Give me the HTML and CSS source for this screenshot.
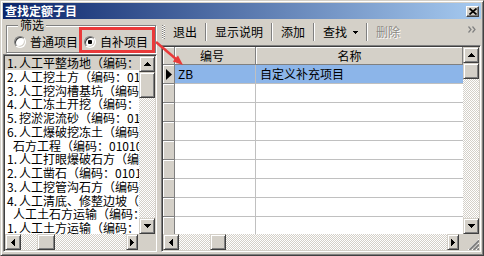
FILE: index.html
```html
<!DOCTYPE html>
<html lang="zh-CN">
<head>
    <meta charset="UTF-8">
    <title>查找定额子目</title>
    <link rel="stylesheet" href="styles.css">
</head>
<body>

<div class="window">
    <div class="titlebar">
        <span class="title">查找定额子目</span>
        <span class="close-btn">
            <svg width="8" height="7" viewBox="0 0 8 7"><path d="M0.5 0.5L7.5 6.5M7.5 0.5L0.5 6.5" stroke="#000" stroke-width="1.7"/></svg>
        </span>
    </div>

    <div class="main">
        <!-- 左侧：筛选 + 定额目录 -->
        <div class="left-pane">
            <fieldset class="filter">
                <legend>筛选</legend>
                <div class="radios">
                    <label class="radio"><span class="radio-dot"></span>普通项目</label>
                    <label class="radio checked"><span class="radio-dot"></span>自补项目</label>
                </div>
            </fieldset>

            <div class="listbox">
                <div class="list-top">
                    <ul class="list-items">
                        <li class="focused"><span class="num">1.</span>人工平整场地（编码：010101001）</li>
                        <li><span class="num">2.</span>人工挖土方（编码：010101002）</li>
                        <li><span class="num">3.</span>人工挖沟槽基坑（编码：010101003）</li>
                        <li><span class="num">4.</span>人工冻土开挖（编码：010101004）</li>
                        <li><span class="num">5.</span>挖淤泥流砂（编码：010101005）</li>
                        <li><span class="num">6.</span>人工爆破挖冻土（编码：010101006）</li>
                        <li class="sub">石方工程（编码：010102）</li>
                        <li><span class="num">1.</span>人工打眼爆破石方（编码：010102001）</li>
                        <li><span class="num">2.</span>人工凿石（编码：010102002）</li>
                        <li><span class="num">3.</span>人工挖管沟石方（编码：010102003）</li>
                        <li><span class="num">4.</span>人工清底、修整边坡（编码：010102004）</li>
                        <li class="sub">人工土石方运输（编码：010103）</li>
                        <li><span class="num">1.</span>人工土方运输（编码：010103001）</li>
                    </ul>
                    <div class="vscroll">
                        <span class="sb-btn"><svg width="7" height="4"><path d="M3 0h1v1h1v1h1v1h1v1H0V3h1V2h1V1h1z"/></svg></span>
                        <span class="sb-thumb list-vthumb"></span>
                        <span class="sb-fill"></span>
                        <span class="sb-btn"><svg width="7" height="4"><path d="M0 0h7v1H6v1H5v1H4v1H3V3H2V2H1V1H0z"/></svg></span>
                    </div>
                </div>
                <div class="list-bottom">
                    <div class="hscroll">
                        <span class="sb-btn"><svg width="4" height="7"><path d="M3 0h1v7H3V6H2V5H1V4H0V3h1V2h1V1h1z"/></svg></span>
                        <span class="sb-thumb list-hthumb"></span>
                        <span class="sb-fill"></span>
                        <span class="sb-btn narrow"><svg width="4" height="7"><path d="M0 0h1v1h1v1h1v1h1v1H3v1H2v1H1v1H0z"/></svg></span>
                    </div>
                    <div class="corner list-corner"></div>
                </div>
            </div>
        </div>

        <!-- 右侧：工具栏 + 自补项目表格 -->
        <div class="right-pane">
            <div class="toolbar">
                <span class="grip"></span>
                <span class="tb-btn">退出</span>
                <span class="tb-sep"></span>
                <span class="tb-btn">显示说明</span>
                <span class="tb-sep"></span>
                <span class="tb-btn">添加</span>
                <span class="tb-sep"></span>
                <span class="tb-btn">查找<svg class="drop" width="5" height="3"><path d="M0 0h5v1H4v1H3v1H2V2H1V1H0z"/></svg></span>
                <span class="tb-sep"></span>
                <span class="tb-btn disabled">删除</span>
                <svg class="chevron" width="8" height="7" viewBox="0 0 8 7"><path d="M0.5 0.5L3 3.5L0.5 6.5M4.5 0.5L7 3.5L4.5 6.5" fill="none" stroke="#808080" stroke-width="1.2"/></svg>
            </div>

            <div class="grid">
                <div class="grid-top">
                    <div class="grid-body">
                        <div class="grid-row grid-head">
                            <div class="ind"></div>
                            <div class="hcell code-head">编号</div>
                            <div class="hcell name-head">名称</div>
                        </div>
                        <div class="grid-row selected">
                            <div class="ind"><svg width="6" height="11"><path d="M0 0L6 5.5L0 11z"/></svg></div>
                            <div class="cell code">ZB</div>
                            <div class="cell">自定义补充项目</div>
                        </div>
                        <div class="grid-row"><div class="ind"></div><div class="cell code"></div><div class="cell"></div></div>
                        <div class="grid-row"><div class="ind"></div><div class="cell code"></div><div class="cell"></div></div>
                        <div class="grid-row"><div class="ind"></div><div class="cell code"></div><div class="cell"></div></div>
                        <div class="grid-row"><div class="ind"></div><div class="cell code"></div><div class="cell"></div></div>
                        <div class="grid-row"><div class="ind"></div><div class="cell code"></div><div class="cell"></div></div>
                        <div class="grid-row"><div class="ind"></div><div class="cell code"></div><div class="cell"></div></div>
                        <div class="grid-row"><div class="ind"></div><div class="cell code"></div><div class="cell"></div></div>
                        <div class="grid-row"><div class="ind"></div><div class="cell code"></div><div class="cell"></div></div>
                    </div>
                    <div class="vscroll">
                        <span class="sb-btn"><svg width="7" height="4"><path d="M3 0h1v1h1v1h1v1h1v1H0V3h1V2h1V1h1z"/></svg></span>
                        <span class="sb-thumb grid-vthumb"></span>
                        <span class="sb-fill"></span>
                        <span class="sb-btn"><svg width="7" height="4"><path d="M0 0h7v1H6v1H5v1H4v1H3V3H2V2H1V1H0z"/></svg></span>
                    </div>
                </div>
                <div class="grid-bottom">
                    <div class="hscroll">
                        <span class="sb-btn"><svg width="4" height="7"><path d="M3 0h1v7H3V6H2V5H1V4H0V3h1V2h1V1h1z"/></svg></span>
                        <span class="sb-thumb grid-hthumb"></span>
                        <span class="sb-fill"></span>
                        <span class="sb-btn narrow"><svg width="4" height="7"><path d="M0 0h1v1h1v1h1v1h1v1H3v1H2v1H1v1H0z"/></svg></span>
                    </div>
                    <div class="corner grid-corner">
                        <svg width="12" height="12"><path d="M12 1L1 12M12 5L5 12M12 9L9 12" stroke="#fff"/><path d="M12 2.5L2.5 12M12 6.5L6.5 12M12 10.5L10.5 12" stroke="#808080" stroke-width="2"/></svg>
                    </div>
                </div>
            </div>
        </div>
    </div>
</div>

<!-- 标注：红框和箭头 -->
<div class="mark-box"></div>
<svg class="mark-arrow" width="484" height="256">
    <line x1="156" y1="42" x2="176" y2="59" stroke="#ea3a3a" stroke-width="2.5"/>
    <path d="M183 65L172.8 61.5L178 55.5z" fill="#ea3a3a"/>
</svg>

</body>
</html>
```

FILE: styles.css
```css
body {
    margin: 0;
    font-family: "Noto Sans CJK SC", sans-serif;
    font-size: 12px;
    color: #000;
    position: relative;
}

.window {
    width: 484px;
    height: 256px;
    box-sizing: border-box;
    background: #d4d0c8;
    border: 1px solid;
    border-color: #d4d0c8 #404040 #404040 #d4d0c8;
    box-shadow: inset 1px 1px #fff, inset -1px -1px #808080;
    padding: 2px;
    display: flex;
    flex-direction: column;
}

/* 标题栏 */
.titlebar {
    height: 16px;
    flex: none;
    display: flex;
    align-items: center;
    padding-left: 2px;
    background: linear-gradient(to right, #0a246a, #a6caf0);
    color: #fff;
}

.title {
    font-weight: bold;
    line-height: 16px;
}

.close-btn {
    margin-left: auto;
    margin-right: 2px;
    width: 13px;
    height: 11px;
    box-sizing: border-box;
    display: flex;
    align-items: center;
    justify-content: center;
    background: #d4d0c8;
    border: 1px solid;
    border-color: #fff #404040 #404040 #fff;
    box-shadow: inset -1px -1px #808080;
}

.main {
    flex: 1;
    display: flex;
    gap: 3px;
    padding-bottom: 1px;
    min-height: 0;
}

/* 左侧 */
.left-pane {
    width: 154px;
    flex: none;
    display: flex;
    flex-direction: column;
}

.filter {
    box-sizing: border-box;
    height: 34px;
    margin: 0 1px 1px 3px;
    padding: 4px 0 0 7px;
    border: 1px solid #808080;
    box-shadow: inset 1px 1px #fff, 1px 1px #fff;
    min-width: 0;
}

.filter legend {
    font-size: 12px;
    line-height: 12px;
    padding: 0 2px;
    margin-left: 4px;
    background: #d4d0c8;
}

.radios {
    display: flex;
    gap: 6px;
}

.radio {
    display: flex;
    align-items: center;
    height: 14px;
    line-height: 14px;
}

.radio-dot {
    width: 12px;
    height: 12px;
    box-sizing: border-box;
    border-radius: 50%;
    background: #fff;
    border: 1px solid;
    border-color: #808080 #fff #fff #808080;
    box-shadow: inset 1px 1px #404040, inset -1px -1px #d4d0c8;
    margin-right: 4px;
}

.checked .radio-dot {
    background: radial-gradient(circle, #000 0 2px, #fff 2.5px);
}

.listbox,
.grid {
    box-sizing: border-box;
    background: #fff;
    border: 1px solid;
    border-color: #808080 #fff #fff #808080;
    box-shadow: inset 1px 1px #404040, inset -1px -1px #d4d0c8;
    padding: 1px;
    display: flex;
    flex-direction: column;
}

.listbox {
    flex: 1;
}

.list-top {
    display: flex;
    height: 178px;
}

.list-items {
    flex: 1;
    margin: 0;
    padding: 0;
    list-style: none;
    overflow: hidden;
}

.list-items li {
    height: 13.75px;
    line-height: 13.75px;
    padding-left: 2px;
    white-space: nowrap;
}

.list-items li.focused {
    background: #d4d0c8;
}

.list-items li.sub {
    padding-left: 8px;
}

.num {
    display: inline-block;
    width: 12px;
}

.list-bottom,
.grid-bottom {
    display: flex;
    height: 16px;
}

/* 滚动条 */
.vscroll,
.hscroll {
    display: flex;
    background: repeating-conic-gradient(#fff 0 25%, #d4d0c8 0 50%) 0 0 / 2px 2px;
}

.vscroll {
    width: 16px;
    flex: none;
    flex-direction: column;
}

.hscroll {
    flex: 1;
}

.sb-btn,
.sb-thumb {
    box-sizing: border-box;
    background: #d4d0c8;
    border: 1px solid;
    border-color: #d4d0c8 #404040 #404040 #d4d0c8;
    box-shadow: inset 1px 1px #fff, inset -1px -1px #808080;
    flex: none;
}

.sb-btn {
    width: 16px;
    height: 16px;
    display: flex;
    align-items: center;
    justify-content: center;
}

.sb-btn.narrow {
    width: 12px;
}

.sb-fill {
    flex: 1;
}

.list-vthumb {
    height: 26px;
}

.list-hthumb {
    width: 18px;
    margin-left: 16px;
}

.grid-vthumb {
    height: 16px;
}

.grid-hthumb {
    width: 16px;
    margin-left: 31px;
}

.corner {
    flex: none;
    background: #d4d0c8;
}

.list-corner {
    width: 17px;
}

.grid-corner {
    width: 20px;
    display: flex;
    align-items: flex-end;
    justify-content: flex-end;
}

/* 右侧 */
.right-pane {
    flex: 1;
    display: flex;
    flex-direction: column;
    min-width: 0;
}

.toolbar {
    height: 24px;
    flex: none;
    margin: 1px 0;
    display: flex;
    align-items: center;
    padding-left: 2px;
}

.grip {
    width: 3px;
    height: 14px;
    background: repeating-linear-gradient(#808080 0 1px, #fff 1px 2px) left / 1px 100% no-repeat,
                repeating-linear-gradient(#fff 0 1px, #808080 1px 2px) 2px 0 / 1px 100% no-repeat;
}

.tb-btn {
    padding: 0 8px;
    line-height: 24px;
    display: flex;
    align-items: center;
}

.tb-btn .drop {
    margin-left: 6px;
}

.tb-btn.disabled {
    color: #8c8a85;
    text-shadow: 1px 1px #fff;
}

.tb-sep {
    width: 0;
    height: 18px;
    border-left: 1px solid #808080;
    border-right: 1px solid #fff;
}

.chevron {
    margin-left: auto;
    margin-right: 5px;
    align-self: flex-start;
    margin-top: 6px;
}

.grid {
    flex: 1;
    margin-left: 1px;
}

.grid-top {
    display: flex;
    height: 187px;
}

.grid-body {
    flex: 1;
    overflow: hidden;
}

.grid-row {
    display: grid;
    grid-template-columns: 12px 81px 1fr;
    height: 19px;
}

.grid-head {
    height: 18px;
}

.ind,
.hcell {
    box-sizing: border-box;
    background: #d4d0c8;
    border-right: 1px solid #808080;
    border-bottom: 1px solid #808080;
    box-shadow: inset 1px 1px #fff;
}

.ind {
    display: flex;
    align-items: center;
    justify-content: center;
}

.hcell {
    text-align: center;
    line-height: 17px;
}

.code-head {
    padding-right: 6px;
}

.name-head {
    padding-right: 19px;
}

.cell {
    box-sizing: border-box;
    border-bottom: 1px solid #c0c0c0;
    line-height: 18px;
    padding-left: 4px;
    white-space: nowrap;
}

.cell.code {
    border-right: 1px solid #c0c0c0;
    padding-left: 3px;
}

.selected .cell {
    background: #8cb5e9;
}

/* 标注 */
.mark-box {
    position: absolute;
    left: 79px;
    top: 27px;
    width: 76px;
    height: 26px;
    box-sizing: border-box;
    border: 3px solid #ea3a3a;
}

.mark-arrow {
    position: absolute;
    left: 0;
    top: 0;
    pointer-events: none;
}
```
